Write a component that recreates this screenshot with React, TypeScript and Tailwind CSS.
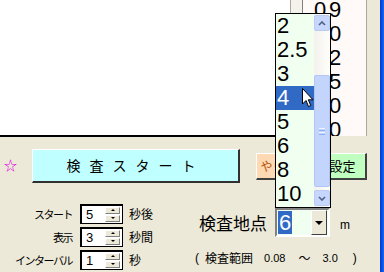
const jp = { fontFamily: '"Noto Sans CJK JP", "MS UI Gothic", sans-serif' };
const num = { fontFamily: '"Liberation Sans", Arial, sans-serif' };

const listItems = ['2', '2.5', '3', '4', '5', '6', '8', '10'];
const digitRows = [
  ['0', '9'],
  ['1', '0'],
  ['1', '2'],
  ['1', '5'],
  ['2', '0'],
  ['3', '0'],
];
const spinRows = [
  { label: 'スタート', value: '5', unit: '秒後' },
  { label: '表示', value: '3', unit: '秒間' },
  { label: 'インターバル', value: '1', unit: '秒' },
];

function SpinBox({ value }: { value: string }) {
  return (
    <div className="flex h-[20px] w-[43px] items-center border border-black bg-white shadow-[inset_1px_1px_0_#000]">
      <span className="ml-[5px] w-[17px] text-[13px] leading-none text-black" style={num}>
        {value}
      </span>
      <div className="ml-auto mr-[2px] flex flex-col gap-px">
        <div className="flex h-[7px] w-[15px] items-center justify-center border border-t-white border-l-white border-r-[#808080] border-b-[#808080] bg-[#ECE9D8]">
          <div className="h-0 w-0 border-x-[2px] border-b-[2px] border-x-transparent border-b-black" />
        </div>
        <div className="flex h-[7px] w-[15px] items-center justify-center border border-t-white border-l-white border-r-[#808080] border-b-[#808080] bg-[#ECE9D8]">
          <div className="h-0 w-0 border-x-[2px] border-t-[2px] border-x-transparent border-t-black" />
        </div>
      </div>
    </div>
  );
}

export default function App() {
  return (
    <div className="relative flex h-[272px] w-[384px] overflow-hidden bg-[#ECE9D8]" style={jp}>
      <div className="flex flex-1 flex-col">
        {/* top area */}
        <div className="flex h-[137px]">
          <div className="h-[137px] w-[290px] border-b-[2px] border-black bg-white" />
          <div className="h-[136px] w-[13px] border-l border-r border-l-[#ACA899] border-r-[#808080] bg-[#F4F2EA]" />
          <div className="flex h-[136px] w-[64px] flex-col overflow-hidden border-r border-[#ACA899] bg-[#FFF9F8] pl-[11px]">
            <div className="-mt-[2px] flex flex-col">
              {digitRows.map((r, i) => (
                <div key={i} className="flex h-[24px] items-center text-[22px] leading-none text-black" style={num}>
                  <span className="w-[15px]">{r[0]}</span>
                  <span>{r[1]}</span>
                </div>
              ))}
            </div>
          </div>
        </div>

        {/* buttons row */}
        <div className="mt-[12px] flex h-[34px] items-start">
          <span className="ml-[4px] mt-[9px] w-[28px] text-[13px] leading-none text-[#E000E0]">☆</span>
          <button className="flex h-[34px] w-[208px] items-center justify-center border-t border-l border-t-white border-l-white border-r-2 border-b-2 border-r-[#303030] border-b-[#303030] bg-[#C0FFFF] text-[14px] tracking-[9px] text-black">
            検査スタート
          </button>
          <button className="ml-[16px] mt-[4px] flex h-[27px] w-[58px] items-center justify-center border-t border-l border-t-white border-l-white border-r-2 border-b-2 border-r-[#404040] border-b-[#404040] bg-[#FFD8B4] text-[12px] text-[#B05000]">
            やり直し
          </button>
          <button className="ml-[5px] mt-[4px] flex h-[27px] w-[48px] items-center justify-center border-t border-l border-t-white border-l-white border-r-2 border-b-2 border-r-[#404040] border-b-[#404040] bg-[#C0FFC0] text-[13px] text-black">
            設定
          </button>
        </div>

        {/* lower controls */}
        <div className="mt-[21px] flex">
          <div className="flex w-[196px] flex-col gap-[3px]">
            {spinRows.map((r) => (
              <div key={r.label} className="flex h-[20px] items-center">
                <span className="w-[72px] text-right text-[11px] leading-none tracking-[-1.5px] text-black">{r.label}</span>
                <div className="ml-[8px]">
                  <SpinBox value={r.value} />
                </div>
                <span className="ml-[6px] text-[12px] leading-none text-black">{r.unit}</span>
              </div>
            ))}
          </div>

          <div className="flex flex-col">
            <div className="mt-[4px] flex h-[29px] items-center">
              <span className="ml-[3px] w-[76px] text-[17px] leading-none text-black">検査地点</span>
              <div className="flex h-[29px] w-[55px] items-center border-2 border-t-[#808080] border-l-[#808080] border-r-white border-b-white bg-[#F0FFF0]">
                <span className="ml-[1px] flex h-[23px] items-center bg-[#316AC5] px-[1px] text-[22px] leading-none text-white" style={num}>
                  6
                </span>
                <div className="ml-auto mr-[1px] flex h-[25px] w-[16px] items-center justify-center border border-t-white border-l-white border-r-[#404040] border-b-[#404040] bg-[#ECE9D8]">
                  <div className="h-0 w-0 border-x-[4px] border-t-[4px] border-x-transparent border-t-black" />
                </div>
              </div>
              <span className="ml-[10px] mt-[5px] text-[12px] leading-none text-black" style={num}>m</span>
            </div>
            <div className="mt-[15px] flex items-center text-[12px] leading-none text-black">
              <span className="-ml-[1px]" style={num}>(</span>
              <span className="ml-[6px]">検査範囲</span>
              <span className="ml-[11px] text-[11px]" style={num}>0.08</span>
              <span className="ml-[13px]">～</span>
              <span className="ml-[12px] text-[11px]" style={num}>3.0</span>
              <span className="ml-[15px]" style={num}>)</span>
            </div>
          </div>
        </div>
      </div>

      {/* window frame edge */}
      <div className="w-[4px] bg-gradient-to-r from-[#0831D9] to-[#166AEE]" />

      {/* dropdown list popup */}
      <div className="absolute left-[275px] top-[13px] flex h-[195px] w-[56px] border border-black bg-[#F0FFF0]">
        <div className="flex w-[38px] flex-col">
          {listItems.map((it) => (
            <div
              key={it}
              className={
                it === '4'
                  ? 'flex h-[24px] items-center bg-[#316AC5] pl-[1px] text-[22px] leading-none text-white'
                  : 'flex h-[24px] items-center pl-[1px] text-[22px] leading-none text-black'
              }
              style={num}
            >
              {it}
            </div>
          ))}
        </div>
        <div className="flex w-[16px] flex-col bg-gradient-to-r from-[#F3F1EC] to-[#FEFEFB]">
          <div className="mt-px flex h-[16px] items-center justify-center rounded-[2px] border border-[#B9CBF3] bg-[#C6D6FC]">
            <svg width="8" height="5" viewBox="0 0 8 5">
              <path d="M1 4 L4 1 L7 4" fill="none" stroke="#4D6185" strokeWidth="1.6" />
            </svg>
          </div>
          <div className="mt-[44px] flex h-[112px] items-center justify-center rounded-[2px] border border-[#B1C6F5] bg-[#C3D4FD]">
            <div className="flex flex-col gap-px">
              <div className="h-px w-[6px] bg-[#EEF4FE]" />
              <div className="h-px w-[6px] bg-[#8CB0F8]" />
              <div className="h-px w-[6px] bg-[#EEF4FE]" />
              <div className="h-px w-[6px] bg-[#8CB0F8]" />
            </div>
          </div>
          <div className="mt-auto mb-px flex h-[16px] items-center justify-center rounded-[2px] border border-[#B9CBF3] bg-[#C6D6FC]">
            <svg width="8" height="5" viewBox="0 0 8 5">
              <path d="M1 1 L4 4 L7 1" fill="none" stroke="#4D6185" strokeWidth="1.6" />
            </svg>
          </div>
        </div>
      </div>

      {/* mouse cursor */}
      <svg className="absolute left-[302px] top-[88px]" width="12" height="20" viewBox="0 0 12 20">
        <path d="M0.5 0.5 L0.5 16 L4 12.5 L6.5 18.5 L8.8 17.5 L6.3 11.8 L11 11.8 Z" fill="white" stroke="black" strokeWidth="1" />
      </svg>
    </div>
  );
}
